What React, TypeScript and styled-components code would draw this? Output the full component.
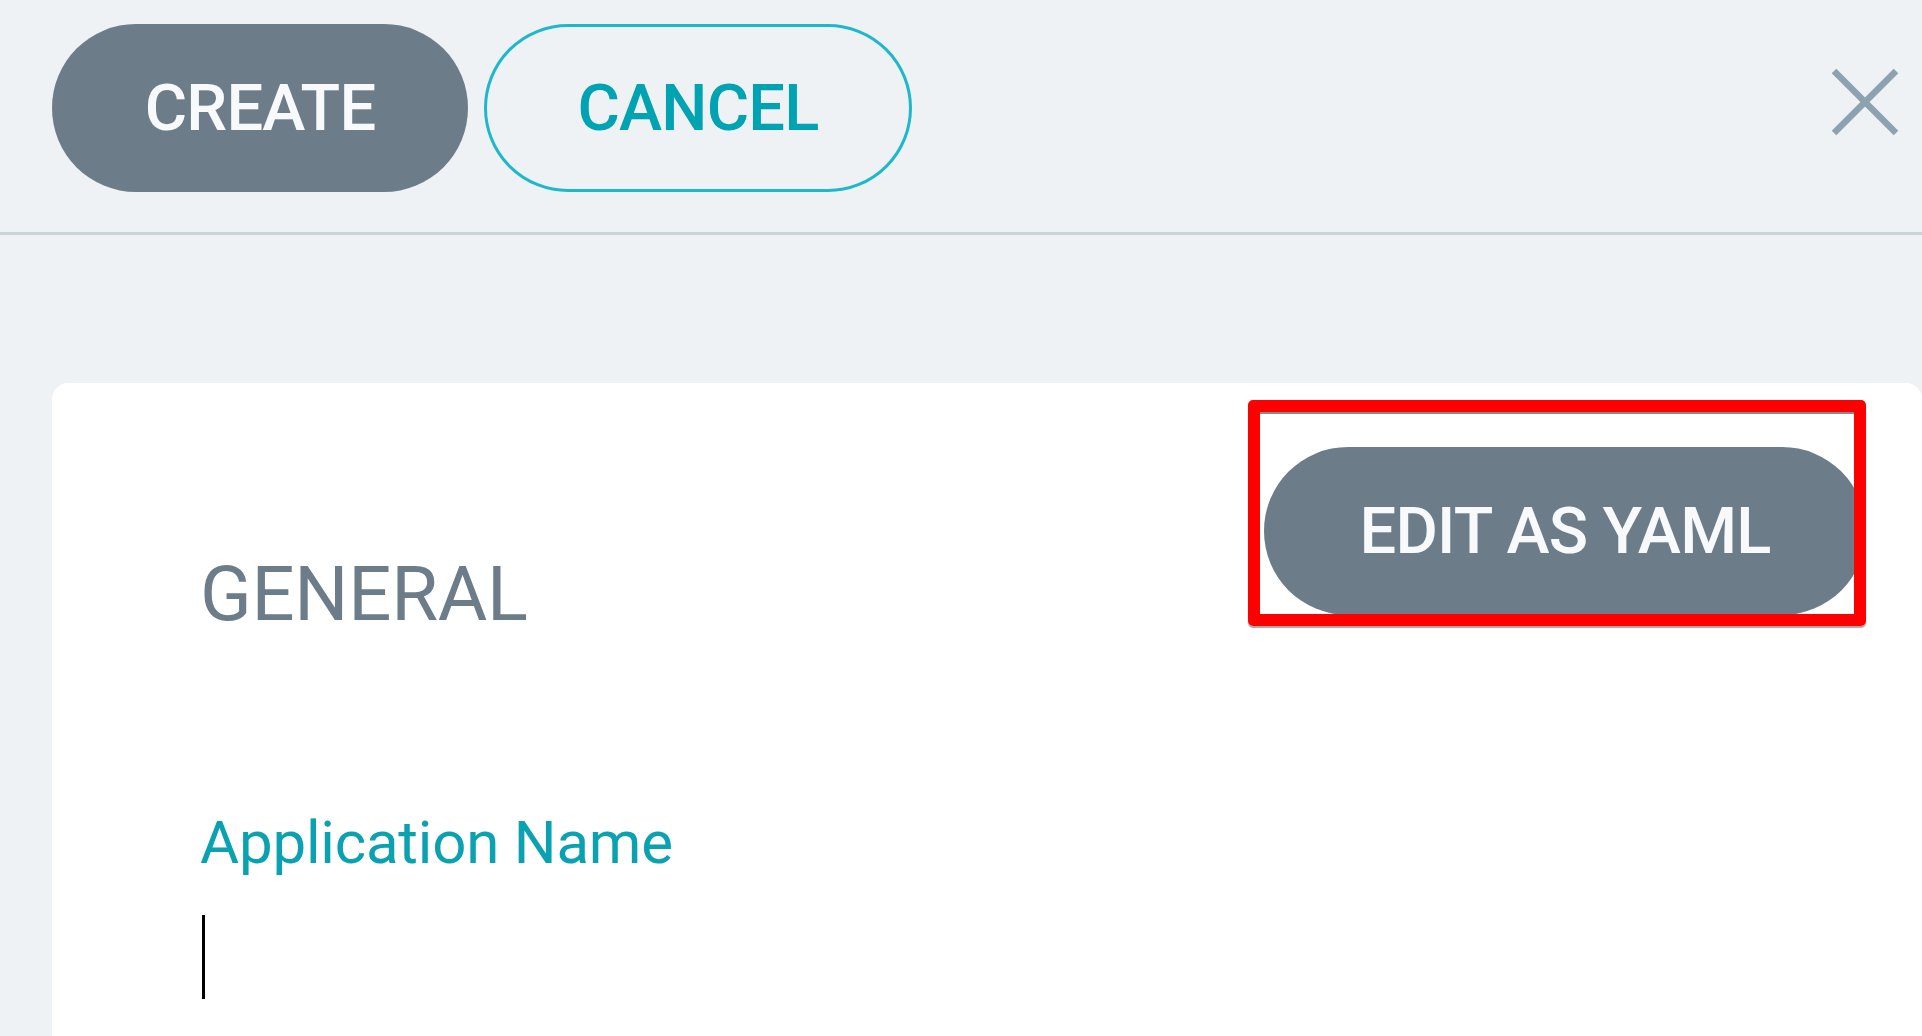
import React from "react";
import styled, { createGlobalStyle } from "styled-components";

const GlobalStyle = createGlobalStyle`
  html, body {
    margin: 0;
    padding: 0;
    background: #eef2f5;
    overflow: hidden;
  }
  body {
    font-family: Roboto, "Liberation Sans", Arial, sans-serif;
  }
  * { box-sizing: border-box; }
`;

const Page = styled.div`
  min-height: 100vh;
  background: #eef2f5;
  display: flex;
  flex-direction: column;
`;

const Header = styled.header`
  display: flex;
  align-items: flex-start;
  gap: 16px;
  padding: 24px 23px 40px 52px;
  border-bottom: 3px solid #cad4d8;
`;

const PillButton = styled.button<{ $variant: "solid" | "outline"; $w: number }>`
  height: 168px;
  width: ${(p) => p.$w}px;
  border-radius: 84px;
  font-family: Roboto, "Liberation Sans", Arial, sans-serif;
  font-weight: 500;
  font-size: 65px;
  letter-spacing: -0.8px;
  display: flex;
  align-items: center;
  justify-content: center;
  padding: 0;
  cursor: pointer;
  flex-shrink: 0;
  ${(p) =>
    p.$variant === "solid"
      ? `
    background: #6c7d89;
    color: #f7f9fa;
    border: none;
  `
      : `
    background: transparent;
    color: #00a3b2;
    border: 3px solid #1fb8ca;
  `}
`;

const Spacer = styled.div`
  flex: 1;
`;

const CloseButton = styled.button`
  margin-top: 44px;
  width: 68px;
  height: 68px;
  padding: 0;
  border: none;
  background: transparent;
  display: flex;
  align-items: center;
  justify-content: center;
  cursor: pointer;
  svg {
    display: block;
  }
`;

const Card = styled.section`
  margin: 148px 0 0 52px;
  flex: 1;
  min-height: 700px;
  background: #ffffff;
  border-radius: 16px 16px 0 0;
  padding: 64px 56px 0 148px;
  display: flex;
  flex-direction: column;
`;

const CardTop = styled.div`
  display: flex;
  align-items: flex-start;
  justify-content: space-between;
`;

const SectionTitle = styled.h2`
  margin: 109px 0 0 0;
  font-family: Roboto, "Liberation Sans", Arial, sans-serif;
  font-weight: 400;
  font-size: 76px;
  line-height: 1;
  color: #6c7d89;
  letter-spacing: -0.3px;
`;

const AnnotatedWrap = styled.div`
  position: relative;
`;

const Highlight = styled.div`
  position: absolute;
  left: -16px;
  top: -47px;
  right: 0;
  bottom: -11px;
  border: 12px solid #ff0000;
  border-radius: 5px;
  box-shadow: inset 0 2px 0 #8a8a8a, 0 2px 1px rgba(0, 0, 0, 0.35);
  pointer-events: none;
`;

const Field = styled.div`
  margin-top: 181px;
  display: flex;
  flex-direction: column;
`;

const FieldLabel = styled.label`
  font-family: Roboto, "Liberation Sans", Arial, sans-serif;
  font-weight: 400;
  font-size: 60px;
  line-height: 1;
  color: #0aa2b1;
  letter-spacing: -0.2px;
`;

const Caret = styled.div`
  margin: 42px 0 0 2px;
  width: 3px;
  height: 84px;
  background: #000;
`;

export default function App() {
  return (
    <>
      <GlobalStyle />
      <Page>
        <Header>
          <PillButton $variant="solid" $w={416}>CREATE</PillButton>
          <PillButton $variant="outline" $w={428}>CANCEL</PillButton>
          <Spacer />
          <CloseButton aria-label="Close">
            <svg width="68" height="68" viewBox="0 0 68 68">
              <line x1="3" y1="3" x2="65" y2="65" stroke="#8da2af" strokeWidth="6.5" />
              <line x1="65" y1="3" x2="3" y2="65" stroke="#8da2af" strokeWidth="6.5" />
            </svg>
          </CloseButton>
        </Header>
        <Card>
          <CardTop>
            <SectionTitle>GENERAL</SectionTitle>
            <AnnotatedWrap>
              <PillButton $variant="solid" $w={602}>EDIT AS YAML</PillButton>
              <Highlight />
            </AnnotatedWrap>
          </CardTop>
          <Field>
            <FieldLabel>Application Name</FieldLabel>
            <Caret />
          </Field>
        </Card>
      </Page>
    </>
  );
}
